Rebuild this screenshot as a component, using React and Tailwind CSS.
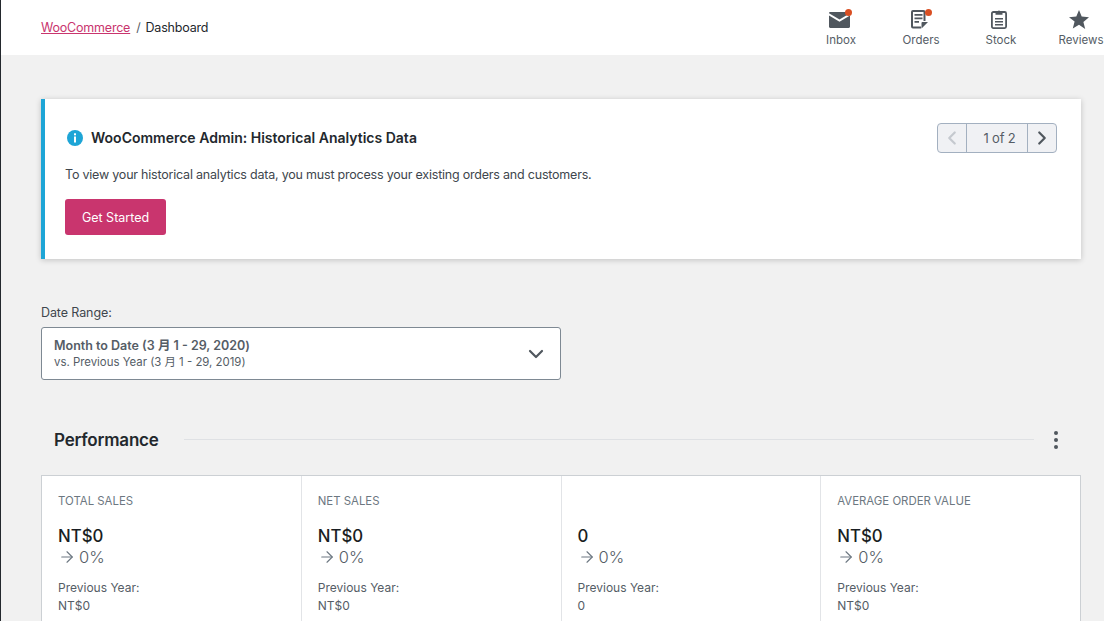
import React from "react";
import { ChevronDown, ChevronLeft, ChevronRight, ArrowRight } from "lucide-react";

function InboxIcon() {
  return (
    <svg width="24" height="24" viewBox="0 0 24 24" className="text-[#50575e]">
      <path fill="currentColor" d="M0 5.200C0 4.500.6 4 1.300 4h18.400c.7 0 1.300.5 1.300 1.200L10.500 11.500 0 5.200z" />
      <path fill="currentColor" d="M0 7.600l10.500 6.200L21 7.600v11.200c0 .7-.6 1.200-1.300 1.200H1.300C.6 20 0 19.500 0 18.800V7.600z" />
    </svg>
  );
}

function OrdersIcon() {
  return (
    <svg width="24" height="24" viewBox="0 0 24 24" className="text-[#50575e]">
      <path fill="none" stroke="currentColor" strokeWidth="2" d="M12 19.500H4a1 1 0 0 1-1-1V4a1 1 0 0 1 1-1h10.500a1 1 0 0 1 1 1v9" />
      <path fill="currentColor" d="M5.500 6h8v1.800h-8zM5.500 9.500h8v1.800h-8zM5.500 13h4.500v1.800H5.500zM12.500 20.500v-5.500a1 1 0 0 1 1-1H19z" />
    </svg>
  );
}

function StockIcon() {
  return (
    <svg width="24" height="24" viewBox="0 0 24 24" className="text-[#50575e]">
      <rect x="2.900" y="4" width="14.200" height="16.100" rx="1.500" fill="none" stroke="currentColor" strokeWidth="1.800" />
      <path fill="currentColor" d="M6.500 6.800V4h2.300L10 2l1.200 2h2.300v2.800zM6 10h8v1.600H6zM6 13h8v1.600H6zM6 16h8v1.600H6z" />
    </svg>
  );
}

function StarIcon() {
  return (
    <svg width="24" height="24" viewBox="0 0 24 24" className="text-[#50575e]">
      <path fill="currentColor" d="M10 2l2.700 6.600 7.300.6-5.600 4.700 1.800 7.100L10 16.700 3.800 20.600l1.800-7.100L0 9.200l7.300-.6z" />
    </svg>
  );
}

function HeaderItem({ label, icon, dot }) {
  return (
    <div className="w-20 flex flex-col items-center shrink-0">
      <div className="relative h-6">
        {icon}
        {dot && <span className="absolute top-[1px] right-[1px] w-[7px] h-[7px] rounded-full bg-[#d94f23]" />}
      </div>
      <div className="text-[11.500px] leading-4 text-[#555d66] whitespace-nowrap">{label}</div>
    </div>
  );
}

function Stat({ title, value, prev, last }) {
  return (
    <div className={`flex-1 h-[200px] pt-4 px-4 ${last ? "" : "border-r border-[#e2e4e7]"}`}>
      <div className="h-[18px] text-[11.400px] leading-[18px] text-[#6c7781] uppercase">{title}</div>
      <div className="mt-[14px] text-[16.800px] leading-[24px] font-medium text-[#191e23]">{value}</div>
      <div className="flex items-center h-[18px] text-[16.500px] leading-[18px] font-light text-[#555d66]">
        <ArrowRight size={18} strokeWidth={1.5} className="mr-[3px] text-[#6c7781]" />
        0%
      </div>
      <div className="mt-[13px] text-[12px] leading-[18px] text-[#555d66]">Previous Year:</div>
      <div className="text-[12px] leading-[18px] text-[#555d66]">{prev}</div>
    </div>
  );
}

export default function App() {
  return (
    <div
      className="relative h-[621px] overflow-hidden bg-[#f1f1f1] border-l border-[#23282d]"
      style={{ fontFamily: "Inter, 'Noto Sans CJK TC', sans-serif" }}
    >
      {/* sliver of the wp sidebar */}
      <span className="absolute left-[-1px] top-[475px] w-px h-[10px] bg-[#0a84c6]" />
      <span className="absolute left-[-1px] top-[485px] w-px h-[15px] bg-[#f1f1f1]" />
      <span className="absolute left-[-1px] top-[500px] w-px h-[9px] bg-[#0a84c6]" />

      <header className="h-[55px] bg-white flex items-start justify-between pl-10">
        <div className="pt-[19px] text-[12.500px] tracking-[-0.2px] leading-[18px] text-[#23282d]">
          <a className="text-[#c9356e] underline">WooCommerce</a>
          <span className="ml-[6px] mr-[5px] text-[#555d66]">/</span>
          <span>Dashboard</span>
        </div>
        <div className="flex pt-[8px] mr-[-17px]">
          <HeaderItem label="Inbox" icon={<InboxIcon />} dot />
          <HeaderItem label="Orders" icon={<OrdersIcon />} dot />
          <HeaderItem label="Stock" icon={<StockIcon />} />
          <HeaderItem label="Reviews" icon={<StarIcon />} />
        </div>
      </header>

      <main className="pl-10 pr-[23px]">
        <section className="mt-11 h-[160px] bg-white border-l-[4px] border-[#1ea5d6] shadow-[0_1px_6px_rgba(0,0,0,0.2)] pl-5 pr-6 pt-6">
          <div className="flex items-center justify-between h-[30px]">
            <div className="flex items-center">
              <svg width="18" height="18" viewBox="0 0 18 18" className="ml-[1px] mr-[7px]">
                <circle cx="9" cy="9" r="8" fill="#1ea5d6" />
                <rect x="8" y="7.500" width="2" height="6" fill="#fff" />
                <rect x="8" y="4.300" width="2" height="2" fill="#fff" />
              </svg>
              <h2 className="text-[14px] leading-[18px] mb-[1px] font-semibold text-[#23282d]">WooCommerce Admin: Historical Analytics Data</h2>
            </div>
            <div className="flex h-[30px] w-[120px] rounded-[4px] border border-[#a3b0c0] bg-[#f0f1f4] text-[#555d66]">
              <div className="w-[29px] flex items-center justify-center border-r border-[#a3b0c0]">
                <ChevronLeft size={22} strokeWidth={2.4} className="text-[#c5c9cf]" />
              </div>
              <div className="flex-1 flex items-center justify-center pl-[5px] pt-[2px] text-[13px] tracking-[-0.15px]">1 of 2</div>
              <div className="w-[29px] flex items-center justify-center border-l border-[#a3b0c0]">
                <ChevronRight size={22} strokeWidth={2.4} className="text-[#50575e]" />
              </div>
            </div>
          </div>
          <p className="mt-[13px] text-[12.500px] tracking-[-0.21px] leading-[18px] text-[#40464d]">
            To view your historical analytics data, you must process your existing orders and customers.
          </p>
          <button className="mt-[15px] block w-[101px] h-9 pt-[2px] rounded-[3px] bg-[#c9356e] text-white text-[12.500px]">Get Started</button>
        </section>

        <div className="mt-[45px] text-[12.500px] leading-[18px] text-[#40464d] tracking-[-0.1px]">Date Range:</div>
        <div className="mt-[5px] w-[520px] h-[53px] bg-white border border-[#7e8993] rounded-[3px] flex items-center justify-between px-3">
          <div>
            <div className="text-[12.500px] leading-[17px] font-semibold text-[#555d66]">Month to Date (3 月 1 - 29, 2020)</div>
            <div className="text-[11.400px] leading-[16px] text-[#555d66]">vs. Previous Year (3 月 1 - 29, 2019)</div>
          </div>
          <ChevronDown size={24} strokeWidth={2.2} className="text-[#50575e]" />
        </div>

        <div className="mt-[40px] h-[40px] flex items-center pl-[13px]">
          <h2 className="text-[17px] pt-[2px] font-semibold tracking-[-0.2px] text-[#23282d] mr-[25px]">Performance</h2>
          <div className="flex-1 h-px mb-[1px] bg-[#dfe1e4]" />
          <div className="w-[47px] pr-[3px] flex flex-col items-center gap-[3px]">
            <span className="w-1 h-1 rounded-full bg-[#50575e]" />
            <span className="w-1 h-1 rounded-full bg-[#50575e]" />
            <span className="w-1 h-1 rounded-full bg-[#50575e]" />
          </div>
        </div>

        <div className="mt-[15px] flex bg-white border border-[#ccd0d4]">
          <Stat title="Total Sales" value="NT$0" prev="NT$0" />
          <Stat title="Net Sales" value="NT$0" prev="NT$0" />
          <Stat title="" value="0" prev="0" />
          <Stat title="Average Order Value" value="NT$0" prev="NT$0" last />
        </div>
      </main>
    </div>
  );
}
